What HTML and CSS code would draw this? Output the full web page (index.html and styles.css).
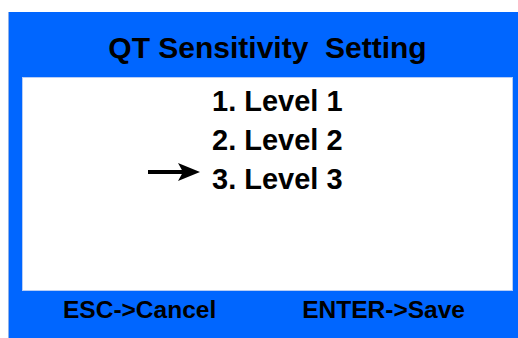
FILE: index.html
```html
<!DOCTYPE html>
<html lang="en">
<head>
    <meta charset="UTF-8">
    <title>QT Sensitivity Setting</title>
    <link rel="stylesheet" href="styles.css">
</head>
<body>
    <div id="screen">
        <div class="title">QT Sensitivity&nbsp; Setting</div>
        <div class="panel">
            <div class="row"><span class="mark"></span><span>1. Level 1</span></div>
            <div class="row"><span class="mark"></span><span>2. Level 2</span></div>
            <div class="row selected">
                <span class="mark">
                    <svg width="52" height="20" viewBox="0 0 52 20">
                        <rect x="0" y="8" width="36" height="4" fill="#000"/>
                        <path d="M30 1 L52 10 L30 19 L35 10 Z" fill="#000"/>
                    </svg>
                </span>
                <span>3. Level 3</span>
            </div>
        </div>
        <div class="footer">
            <span class="key esc">ESC-&gt;Cancel</span>
            <span class="key enter">ENTER-&gt;Save</span>
        </div>
    </div>
</body>
</html>
```

FILE: styles.css
```css
* {
    box-sizing: border-box;
}
body {
    margin: 0;
    background: #fff;
    font-family: "Liberation Sans", Arial, sans-serif;
    font-weight: bold;
    color: #000;
}
#screen {
    margin: 12px 0 0 8px;
    width: 510px;
    height: 326px;
    background: #0066ff;
    border-left: 1px solid #8fb0e8;
    padding: 0 5px 0 13px;
    display: flex;
    flex-direction: column;
}
.title {
    height: 65px;
    padding-top: 19px;
    font-size: 30px;
    line-height: 34px;
    text-align: center;
}
.panel {
    height: 214px;
    background: #fff;
    border: 1px solid #b8cdf5;
    padding-top: 4px;
}
.row {
    display: flex;
    padding-left: 125px;
    font-size: 29px;
    line-height: 39px;
    height: 39px;
}
.mark {
    width: 64px;
    flex: none;
}
.mark svg {
    display: block;
    margin-top: 2px;
}
.footer {
    display: flex;
    padding-top: 7px;
    font-size: 24.5px;
    line-height: 24px;
}
.esc {
    margin-left: 41px;
}
.enter {
    margin-left: 86px;
}
```
